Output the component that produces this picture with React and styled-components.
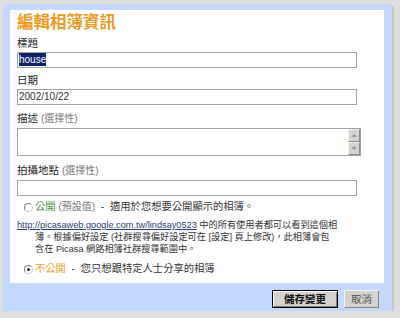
import styled, { createGlobalStyle } from 'styled-components'

const GlobalStyle = createGlobalStyle`
  body {
    margin: 0;
    background: #dfdfdf;
    font-family: "Liberation Sans", "Noto Sans CJK TC", sans-serif;
    color: #2a2a2a;
  }
`

export default function App() {
  return (
    <Page>
      <GlobalStyle />
      <Frame>
        <Panel>
          <Title>編輯相簿資訊</Title>

          <Field $top={4}>
            <Label>標題</Label>
            <TextBox>
              <Selected>house</Selected>
            </TextBox>
          </Field>

          <Field $top={5}>
            <Label>日期</Label>
            <TextBox>2002/10/22</TextBox>
          </Field>

          <Field $top={6}>
            <Label>
              描述 <Optional>(選擇性)</Optional>
            </Label>
            <AreaBox>
              <AreaText />
              <ScrollBar>
                <ScrollButton $dir="up" />
                <ScrollButton $dir="down" />
              </ScrollBar>
            </AreaBox>
          </Field>

          <Field $top={7}>
            <Label>
              拍攝地點 <Optional>(選擇性)</Optional>
            </Label>
            <TextBox />
          </Field>

          <RadioRow $top={4}>
            <Radio />
            <span>
              <Public>公開</Public> <Optional>(預設值)</Optional>&nbsp; -&nbsp;
              適用於您想要公開顯示的相簿。
            </span>
          </RadioRow>

          <Note>
            <Link>http://picasaweb.google.com.tw/lindsay0523</Link> 中的所有使用者都可以看到這個相
            <br />
            簿。根據偏好設定 (社群搜尋偏好設定可在 [設定] 頁上修改)，此相簿會包
            <br />
            含在 Picasa 網路相簿社群搜尋範圍中。
          </Note>

          <RadioRow $top={7}>
            <Radio $checked />
            <span>
              <Private>不公開</Private>&nbsp; -&nbsp; 您只想跟特定人士分享的相簿
            </span>
          </RadioRow>
        </Panel>

        <Actions>
          <Button $primary>儲存變更</Button>
          <Button>取消</Button>
        </Actions>
      </Frame>
    </Page>
  )
}

const Page = styled.div`
  padding: 4px 0 0 3px;
`

const Frame = styled.div`
  box-sizing: border-box;
  width: 389px;
  height: 307px;
  background: #c3d9ff;
  padding: 6px 8px 3px 7px;
  box-shadow: 2px 2px 0 #c6c6c6;
  display: flex;
  flex-direction: column;
`

const Panel = styled.div`
  box-sizing: border-box;
  height: 273px;
  background: #ffffff;
  padding: 2px 7px 0;
  display: flex;
  flex-direction: column;
`

const Title = styled.h1`
  margin: 0;
  font-size: 16.5px;
  line-height: 20px;
  font-weight: bold;
  color: #ec9a22;
`

const Field = styled.div`
  margin-top: ${p => p.$top}px;
  display: flex;
  flex-direction: column;
  gap: 2px;
`

const Label = styled.div`
  font-size: 10.5px;
  line-height: 14px;
  color: #222;
`

const Optional = styled.span`
  font-size: 10px;
  color: #777;
`

const TextBox = styled.div`
  box-sizing: border-box;
  width: 340px;
  height: 16px;
  border: 1px solid #9ea3a8;
  background: #fffffd;
  font-size: 10px;
  line-height: 14px;
  padding-left: 1px;
  color: #333;
`

const Selected = styled.span`
  background: #0a246a;
  color: #fff;
  padding: 1px 0;
`

const AreaBox = styled.div`
  box-sizing: border-box;
  width: 344px;
  height: 28px;
  border: 1px solid #9ea3a8;
  background: #fffffd;
  display: flex;
`

const AreaText = styled.div`
  flex: 1;
`

const ScrollBar = styled.div`
  width: 12px;
  display: flex;
  flex-direction: column;
`

const ScrollButton = styled.div`
  flex: 1;
  box-sizing: border-box;
  background: #d6d3ce;
  border: 1px solid;
  border-color: #f2f1ee #8e8c88 #8e8c88 #f2f1ee;
  display: flex;
  align-items: center;
  justify-content: center;

  &::after {
    content: '';
    border-left: 3px solid transparent;
    border-right: 3px solid transparent;
    ${p =>
      p.$dir === 'up'
        ? 'border-bottom: 3px solid #a09e9a;'
        : 'border-top: 3px solid #a09e9a;'}
  }
`

const RadioRow = styled.div`
  margin-top: ${p => p.$top}px;
  display: flex;
  align-items: center;
  padding-left: 7px;
  font-size: 10.3px;
  line-height: 14px;
  color: #333;
`

const Radio = styled.span`
  box-sizing: border-box;
  width: 9px;
  height: 9px;
  margin-right: 2px;
  border-radius: 50%;
  border: 1px solid;
  border-color: #7a7a7a #d0d0d0 #d0d0d0 #7a7a7a;
  background: #fff;
  display: flex;
  align-items: center;
  justify-content: center;

  &::after {
    content: '';
    width: 3px;
    height: 3px;
    border-radius: 50%;
    background: ${p => (p.$checked ? '#111' : 'transparent')};
  }
`

const Public = styled.span`
  color: #3c9a3c;
`

const Private = styled.span`
  color: #e9a21c;
`

const Note = styled.p`
  margin: 5px 0 0 18px;
  text-indent: -18px;
  width: 320px;
  font-size: 9.2px;
  line-height: 12px;
  color: #333;
`

const Link = styled.a`
  color: #2a3b78;
  text-decoration: underline;
`

const Actions = styled.div`
  margin-top: 7px;
  padding-right: 5px;
  display: flex;
  justify-content: flex-end;
  gap: 6px;
`

const Button = styled.button`
  box-sizing: border-box;
  height: 18px;
  padding: 0 6px;
  min-width: ${p => (p.$primary ? '66px' : '32px')};
  font-family: "Liberation Sans", "Noto Sans CJK TC", sans-serif;
  font-size: 10.5px;
  line-height: 14px;
  font-weight: ${p => (p.$primary ? 'bold' : 'normal')};
  color: ${p => (p.$primary ? '#111' : '#555')};
  background: #d4d2ce;
  border: 1px solid;
  border-color: ${p =>
    p.$primary ? '#000' : '#f4f4f4 #808080 #808080 #f4f4f4'};
  box-shadow: ${p =>
    p.$primary ? 'inset 1px 1px 0 #fff, inset -1px -1px 0 #808080' : 'none'};
`
